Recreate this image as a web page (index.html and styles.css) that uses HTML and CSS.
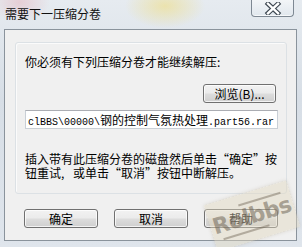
FILE: index.html
```
<!DOCTYPE html>
<html>
    <head>
        <meta charset="utf-8">
        <link rel="stylesheet" href="styles.css">
    </head>
    <body>
        <div class="window">
            <div class="titlebar">
                <span class="title">需要下一压缩分卷</span>
                <div class="closebtn">
                    <svg width="20" height="13" viewBox="0 0 20 13">
                        <path d="M5 1.8 L15 11.2 M15 1.8 L5 11.2" stroke="#3c4650" stroke-width="4.6" stroke-linecap="square"/>
                        <path d="M5 1.8 L15 11.2 M15 1.8 L5 11.2" stroke="#ffffff" stroke-width="2.4" stroke-linecap="square"/>
                    </svg>
                </div>
            </div>
            <div class="client">
                <div class="group">
                    <p class="label">你必须有下列压缩分卷才能继续解压:</p>
                    <div class="browseRow">
                        <button class="btn browse">浏览(B)...</button>
                    </div>
                    <div class="field"><span class="mono">clBBS\00000\</span>钢的控制气氛热处理<span class="mono">.part56.rar</span></div>
                    <p class="hint">插入带有此压缩分卷的磁盘然后单击<span class="qo">“</span>确定<span class="qc">”</span>按<br>钮重试<span class="qc">,</span>或单击<span class="qo">“</span>取消<span class="qc">”</span>按钮中断解压。</p>
                </div>
                <div class="buttons">
                    <button class="btn">确定</button>
                    <button class="btn">取消</button>
                    <button class="btn">帮助</button>
                </div>
            </div>
            <div class="stamp">
                <span class="dash d1"></span>
                <span class="stampText">Rolbbs</span>
                <span class="dash d2"></span>
            </div>
        </div>
    </body>
</html>
```
FILE: styles.css
```
body{
    margin: 0;
    font-family: "Noto Sans CJK SC", sans-serif;
    font-size: 12px;
    color: #000;
}
.window{
    position: relative;
    width: 302px;
    height: 247px;
    box-sizing: border-box;
    padding: 0 5px 6px 4px;
    overflow: hidden;
    background:
        radial-gradient(ellipse 40px 22px at 165px 6px, rgba(240,220,120,0.55), rgba(240,220,120,0) 100%),
        radial-gradient(ellipse 30px 20px at 20px 2px, rgba(230,170,180,0.45), rgba(230,170,180,0) 100%),
        linear-gradient(180deg, #e6ebf0 0%, #d7dee6 40%, #dfe5ec 100%);
    display: flex;
    flex-direction: column;
}
.titlebar{
    height: 29px;
    display: flex;
    align-items: flex-start;
    justify-content: space-between;
}
.title{
    margin: 7px 0 0 1px;
    font-size: 12px;
    line-height: 14px;
    color: #111;
}
.closebtn{
    width: 43px;
    height: 17px;
    box-sizing: border-box;
    margin-right: 3px;
    border: 1px solid #7e8893;
    border-top: 0;
    border-radius: 0 0 4px 4px;
    background: linear-gradient(180deg, rgba(255,255,255,0.5), rgba(220,228,236,0.4));
    box-shadow: inset 0 -1px 0 rgba(255,255,255,0.7);
    display: flex;
    align-items: center;
    justify-content: center;
}
.client{
    flex: 1;
    background: #f0f0f0;
    border: 1px solid #8a939c;
    display: flex;
    flex-direction: column;
}
.group{
    margin: 12px 0 0 10px;
    width: 272px;
    height: 152px;
    box-sizing: border-box;
    border: 1px solid #dce1e5;
    border-radius: 3px;
    box-shadow: inset 1px 1px 0 #fbfbfb;
    padding: 12px 0 0 9px;
}
.label{
    margin: 0;
    line-height: 13px;
}
.browseRow{
    display: flex;
    justify-content: flex-end;
    padding-right: 10px;
    margin-top: 16px;
}
.btn{
    width: 74px;
    height: 19px;
    padding: 0;
    font-family: "Noto Sans CJK SC", sans-serif;
    font-size: 12px;
    line-height: 15px;
    color: #000;
    border: 1px solid #707070;
    border-radius: 3px;
    background: linear-gradient(180deg, #f2f2f2 0%, #ebebeb 48%, #dddddd 52%, #cfcfcf 100%);
    box-shadow: inset 0 0 0 1px rgba(255,255,255,0.75);
}
.browse{
    width: 73px;
}
.field{
    margin-top: 7px;
    width: 253px;
    height: 19px;
    box-sizing: border-box;
    border: 1px solid #c9cfd6;
    border-top-color: #abadb3;
    background: #fff;
    padding: 0 0 0 2px;
    line-height: 17px;
    font-size: 12px;
    white-space: nowrap;
    overflow: hidden;
}
.mono{
    font-family: "Liberation Mono", monospace;
    font-size: 10px;
}
.hint{
    margin: 23px 0 0 0;
    line-height: 14px;
    white-space: nowrap;
}
.qo, .qc{
    display: inline-block;
    width: 12px;
}
.qo{
    text-align: right;
}
.qc{
    text-align: left;
}
.buttons{
    display: flex;
    gap: 16px;
    margin: 15px 0 0 19px;
}
.stamp{
    position: absolute;
    left: 209px;
    top: 192px;
    width: 86px;
    height: 48px;
    transform: rotate(-17deg);
    background: rgba(225,215,190,0.45);
    box-shadow: 0 0 4px rgba(180,170,150,0.4);
    display: flex;
    flex-direction: column;
    align-items: center;
    justify-content: center;
}
.stampText{
    font-family: "DejaVu Sans", sans-serif;
    font-weight: bold;
    font-size: 22px;
    line-height: 22px;
    color: rgba(110,100,85,0.55);
    letter-spacing: -0.5px;
}
.dash{
    display: block;
    height: 2px;
    background: rgba(110,100,85,0.45);
}
.d1{
    width: 44px;
    margin: 0 0 2px 24px;
}
.d2{
    width: 48px;
    margin: 2px 20px 0 0;
}
```
